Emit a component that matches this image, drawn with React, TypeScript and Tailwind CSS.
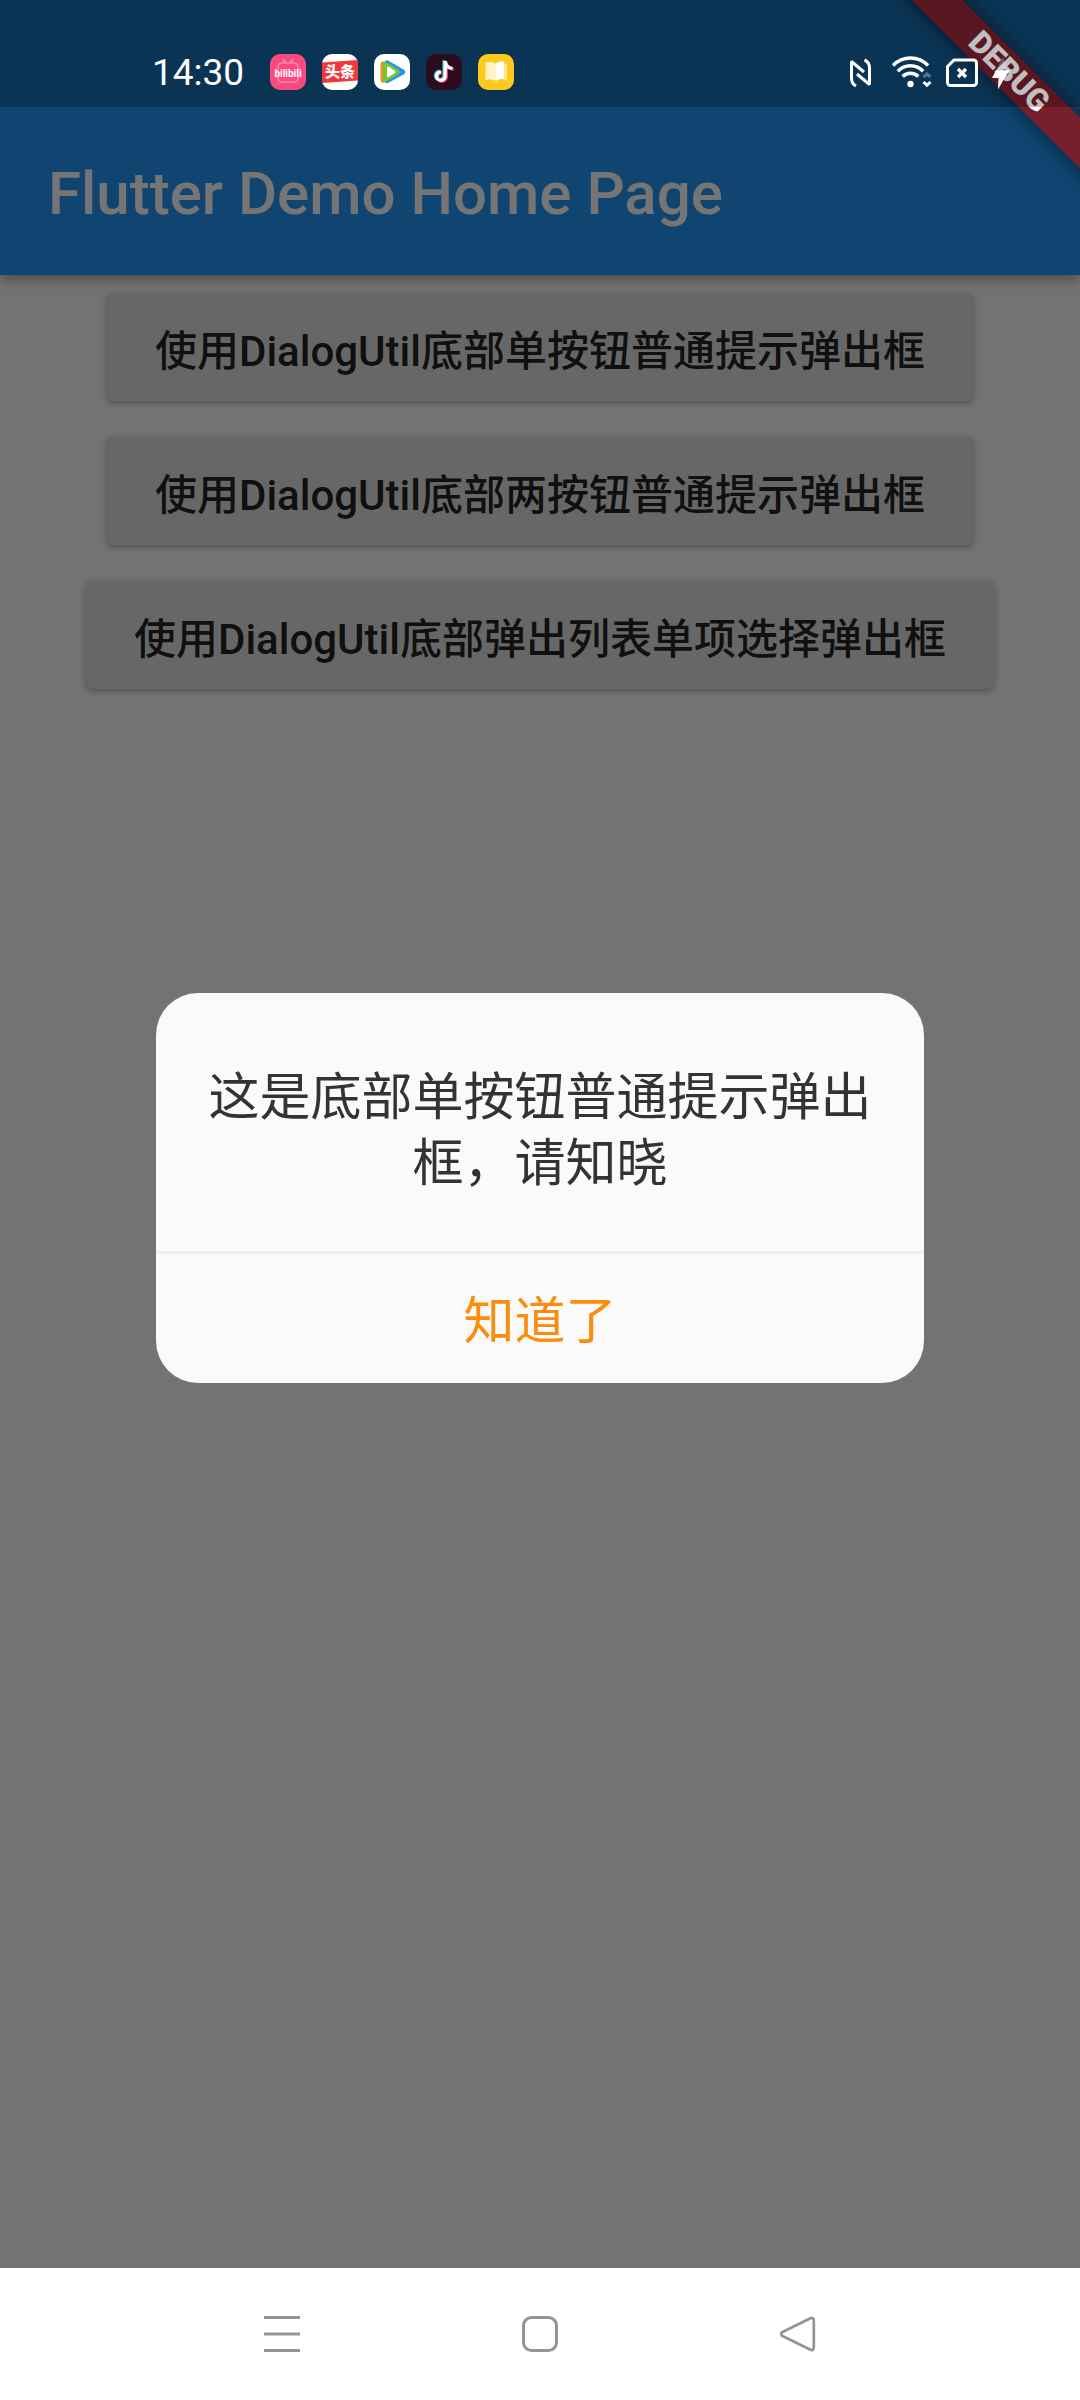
import { useState } from "react";

const actions = [
  "使用DialogUtil底部单按钮普通提示弹出框",
  "使用DialogUtil底部两按钮普通提示弹出框",
  "使用DialogUtil底部弹出列表单项选择弹出框",
];

function BilibiliIcon() {
  return (
    <svg className="size-9" viewBox="0 0 36 36">
      <rect width="36" height="36" rx="10" fill="#fb4a82" />
      <g fill="none" stroke="#fd86ac" strokeWidth="1.6" strokeLinecap="round">
        <rect x="8" y="9" width="20" height="19" rx="4" />
        <path d="M13 5.5l3 3.5M23 5.5l-3 3.5" />
      </g>
      <text
        x="18"
        y="23"
        textAnchor="middle"
        fontSize="10"
        fontWeight="700"
        fill="#fff"
        className="font-['Roboto',sans-serif]"
      >
        bilibili
      </text>
    </svg>
  );
}

function ToutiaoIcon() {
  return (
    <svg className="size-9" viewBox="0 0 36 36">
      <rect width="36" height="36" rx="10" fill="#fff" />
      <path d="M0 8.500L36 6v20.500L0 29z" fill="#f2383d" />
      <text
        x="18"
        y="23"
        textAnchor="middle"
        fontSize="15"
        fontWeight="900"
        fill="#fff"
        className="font-['Noto_Sans_CJK_SC',sans-serif]"
      >
        头条
      </text>
    </svg>
  );
}

function VideoIcon() {
  return (
    <svg className="size-9" viewBox="0 0 36 36">
      <rect width="36" height="36" rx="10" fill="#fff" />
      <path
        d="M10.500 9c0-2.400 2-3.300 4-2.300l15.500 9c1.800 1.100 1.800 3.500 0 4.600l-15.500 8.500c-2 1-4 .2-4-2.200z"
        fill="#2b95ee"
      />
      <path
        d="M6.500 10.500c0-2.600 1.700-3.700 4-2.600L8.500 18l2 10.300c-2.300 1-4-.200-4-2.800z"
        fill="#ff8a1e"
      />
      <path
        d="M8.500 10c0-2 1.700-2.700 3.400-1.800l12.600 7.500c1.700 1 1.700 3.200 0 4.200L12 27.500c-1.800 1-3.500.2-3.500-1.700z"
        fill="#7bc62d"
      />
      <path d="M13 13.500c0-1 .8-1.400 1.600-.9l6.400 4.300c.8.500.8 1.500 0 2L14.600 23c-.8.500-1.600.100-1.600-.8z" fill="#fff" />
    </svg>
  );
}

function DouyinIcon() {
  const note =
    "M19.200 7v15.200a4.300 4.300 0 1 1-4.300-4.300M19.200 8c.8 4 3.400 6.200 7.300 6.500";
  return (
    <svg className="size-9" viewBox="0 0 36 36">
      <rect width="36" height="36" rx="10" fill="#2a0c1e" />
      <g fill="none" strokeWidth="3.200">
        <path d={note} stroke="#25d8dc" transform="translate(-1.200 -.8)" />
        <path d={note} stroke="#f2305a" transform="translate(1.200 .8)" />
        <path d={note} stroke="#fff" />
      </g>
    </svg>
  );
}

function BookIcon() {
  return (
    <svg className="size-9" viewBox="0 0 36 36">
      <rect width="36" height="36" rx="10" fill="#fdc91c" />
      <path d="M25 9.500h4v16h-4z" fill="#fee48a" />
      <path d="M7.500 8.500c4-1 7.500-.7 10.500 1V27c-3-1.500-6.500-1.800-10.500-1z" fill="#fff3c9" />
      <path d="M18 9.500c2-1.500 5-2.300 8-2.300v17.500c-3 0-6 .8-8 2.300z" fill="#fff" />
    </svg>
  );
}

function StatusIcons() {
  return (
    <div className="flex items-center text-white">
      {/* nfc */}
      <svg className="mr-5 h-8 w-6" viewBox="0 0 24 32" fill="none" stroke="currentColor" strokeWidth="3">
        <path d="M8 30c-3-1.500-4.500-4-4.500-8V5.500L16 16" strokeLinejoin="bevel" />
        <path d="M16.500 4c3.500 1.500 5 4 5 8v16.500L9 18" strokeLinejoin="bevel" />
      </svg>
      {/* wifi */}
      <svg className="mr-3.5 h-8 w-10" viewBox="0 0 40 32" fill="none" stroke="currentColor" strokeWidth="3.500">
        <path d="M1 9.500a24 24 0 0 1 35 0" />
        <path d="M5.800 15.200a17.500 17.500 0 0 1 25.400 0" />
        <path d="M10.700 20.500a11 11 0 0 1 15.600 0" />
        <circle cx="18.500" cy="28" r="3.200" fill="currentColor" stroke="none" />
        <path d="M31.500 21l3.500-3 3.500 3" stroke="#5c6f84" strokeWidth="3" />
        <path d="M31.500 26l3.500 3.200 3.500-3.200" strokeWidth="3" />
      </svg>
      {/* sim card */}
      <svg className="mr-2.5 h-8 w-8" viewBox="0 -1 32 32" fill="none" stroke="currentColor">
        <path d="M8 3h19.500a3 3 0 0 1 3 3v19.500a3 3 0 0 1-3 3h-23a3 3 0 0 1-3-3V9.500z" strokeWidth="3" />
        <path d="M12 12l8 8M20 12l-8 8" strokeWidth="3.200" />
      </svg>
      {/* charging bolt */}
      <svg className="h-9 w-7" viewBox="0 0 28 36" fill="currentColor">
        <path d="M15 3L9 15h10z" opacity=".25" />
        <path d="M8 16.500l14-.5-5.500 8L10 35.500l.5-11.500H4z" />
      </svg>
    </div>
  );
}

export default function App() {
  const [open, setOpen] = useState(true);

  return (
    <div className="flex min-h-screen flex-col bg-white font-['Roboto','Noto_Sans_CJK_SC',sans-serif]">
      <div className="relative flex flex-1 flex-col overflow-hidden bg-[#fafafa]">
        {/* App bar */}
        <header className="relative bg-[#2196f3] pt-[107px] shadow-[0_4px_12px_rgba(0,0,0,0.35)]">
          <h1 className="flex h-42 items-center px-12 pt-1.5 text-[60px] font-medium text-white">
            Flutter Demo Home Page
          </h1>
        </header>

        <main className="flex flex-col items-center gap-9 pt-[18px]">
          {actions.map((label) => (
            <button
              key={label}
              onClick={() => setOpen(true)}
              className="h-27 rounded-md bg-[#e0e0e0] px-12 pt-2 text-[42px] font-medium whitespace-nowrap text-black/87 shadow-[0_2px_6px_rgba(0,0,0,0.3)]"
            >
              {label}
            </button>
          ))}
        </main>

        {/* Dialog */}
        {open && (
          <div className="absolute inset-0 flex items-center justify-center bg-black/54 px-39 pt-[107px]">
            <div role="dialog" className="w-full max-w-3xl overflow-hidden rounded-[42px] bg-[#fafafa]">
              <p className="px-11 pt-[72px] pb-[54px] text-center text-[51px] leading-[66px] text-[#333333]">
                这是底部单按钮普通提示弹出框，请知晓
              </p>
              <button
                onClick={() => setOpen(false)}
                className="h-[132px] w-full border-t-3 border-[#eeeeee] pt-2 text-[51px] text-[#fb8c0c]"
              >
                知道了
              </button>
            </div>
          </div>
        )}

        {/* Debug banner */}
        <div className="pointer-events-none absolute top-0 right-0 flex size-[143px] items-center justify-center">
          <div className="flex h-9 w-80 shrink-0 rotate-45 items-center justify-center bg-[#77202c] text-[31px] font-black text-white shadow-[0_0_18px_rgba(0,0,0,0.5)]">
            DEBUG
          </div>
        </div>

        {/* Status bar */}
        <div className="absolute inset-x-0 top-0 h-[107px] bg-black/25" />
        <div className="absolute inset-x-0 top-0 flex h-[107px] items-center justify-between pt-9 pr-16 pl-[152px]">
          <div className="flex items-center gap-4">
            <span className="mr-2.5 pt-0.5 text-[37px] leading-none text-white">14:30</span>
            <BilibiliIcon />
            <ToutiaoIcon />
            <VideoIcon />
            <DouyinIcon />
            <BookIcon />
          </div>
          <StatusIcons />
        </div>
      </div>

      {/* System navigation */}
      <nav className="flex h-[132px] items-center justify-center bg-white text-[#949494]">
        <button aria-label="Recent apps" className="flex w-[258px] justify-center">
          <svg className="size-9" viewBox="0 0 36 36" stroke="currentColor" strokeWidth="3">
            <path d="M0 1.500h36M0 18h36M0 34.500h36" />
          </svg>
        </button>
        <button aria-label="Home" className="flex w-[258px] justify-center">
          <svg className="size-9" viewBox="0 0 36 36" fill="none" stroke="currentColor" strokeWidth="3">
            <rect x="1.500" y="1.500" width="33" height="33" rx="8" />
          </svg>
        </button>
        <button aria-label="Back" className="flex w-[258px] justify-center">
          <svg className="size-9" viewBox="0 0 36 36" fill="none" stroke="currentColor" strokeWidth="2.700">
            <path d="M2.500 16L30.500 2.200c1.700-.8 3.300.2 3.300 2v27.600c0 1.800-1.600 2.800-3.300 2L2.500 20c-1.600-1-1.600-3 0-4z" />
          </svg>
        </button>
      </nav>
    </div>
  );
}
